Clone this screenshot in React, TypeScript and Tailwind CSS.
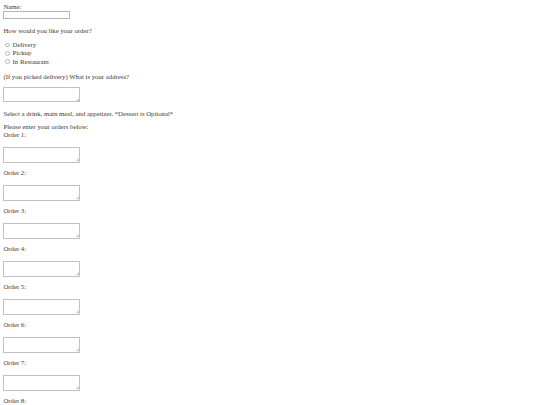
import { useState } from 'react'

const orders = [1, 2, 3, 4, 5, 6, 7, 8]
const methods = ['Delivery', 'Pickup', 'In Restaurant']

function Grip() {
  return (
    <svg className="absolute right-[1px] bottom-[1px] w-[3.5px] h-[3.5px]" viewBox="0 0 6 6">
      <path d="M5.5 0.5 L0.5 5.5 M5.5 3 L3 5.5" stroke="#a8a8a8" strokeWidth={1.4} />
    </svg>
  )
}

function Area() {
  return (
    <div className="relative w-[77px] h-[15.5px]">
      <textarea className="block w-full h-full resize-none border border-[#c2c2c2] bg-white outline-none" />
      <Grip />
    </div>
  )
}

export default function App() {
  const [method, setMethod] = useState('')

  return (
    <div className="min-h-screen bg-white text-[#3a3a3a] pl-[3.4px] pt-[2.8px] font-['Liberation_Serif',serif] text-[6.75px] leading-[7.8px]">
      <div>Name:</div>
      <input
        type="text"
        className="block mt-[0.4px] w-[67px] h-[8px] border border-[#b4b4b4] bg-white outline-none"
      />

      <div className="mt-[8.1px]">How would you like your order?</div>

      <div className="mt-[5.95px] flex flex-col">
        {methods.map((m) => (
          <label key={m} className="flex items-center h-[8.3px]">
            <input
              type="radio"
              name="method"
              checked={method === m}
              onChange={() => setMethod(m)}
              className="appearance-none ml-[1.6px] mr-[3px] w-[4.6px] h-[4.6px] rounded-full border border-[#b8b8b8] bg-white"
            />
            <span>{m}</span>
          </label>
        ))}
      </div>

      <div className="mt-[7.65px]">(If you picked delivery) What is your address?</div>
      <div className="mt-[5.8px]">
        <Area />
      </div>

      <div className="mt-[7.9px]">Select a drink, main meal, and appetizer. *Dessert is Optional*</div>

      <div className="mt-[5.3px]">Please enter your orders below:</div>

      {orders.map((n, i) => (
        <div key={n} className={i === 0 ? '' : 'mt-[6.6px]'}>
          <div>Order {n}:</div>
          <div className="mt-[8.1px]">
            <Area />
          </div>
        </div>
      ))}
    </div>
  )
}
